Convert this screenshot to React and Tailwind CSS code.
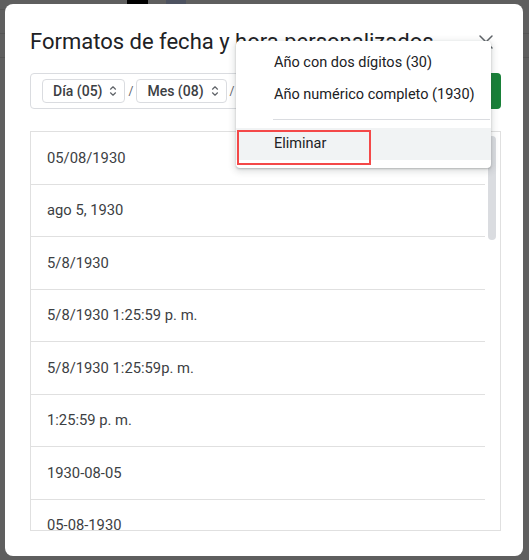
import React from 'react';
import { X } from 'lucide-react';

const FORMATS = [
  '05/08/1930',
  'ago 5, 1930',
  '5/8/1930',
  '5/8/1930 1:25:59 p. m.',
  '5/8/1930 1:25:59p. m.',
  '1:25:59 p. m.',
  '1930-08-05',
  '05-08-1930',
];

const UnfoldIcon = () => (
  <svg width="10" height="12" viewBox="0 0 10 12" fill="none" stroke="#5f6368" strokeWidth="1.2" strokeLinecap="round" strokeLinejoin="round">
    <path d="M2.5 4.2 L5 1.8 L7.5 4.2" />
    <path d="M2.5 7.8 L5 10.2 L7.5 7.8" />
  </svg>
);

const Chip = ({ label }) => (
  <div className="flex items-center h-[24px] pl-[10px] pr-[6px] gap-[6px] border border-[#dadce0] rounded-[4px] text-[14px] font-medium text-[#3c4043]">
    <span>{label}</span>
    <UnfoldIcon />
  </div>
);

const App = () => {
  return (
    <div className="relative w-[529px] h-[560px] overflow-hidden bg-[#5f5f5f] pt-[4px] pl-[5px] pr-[6px] pb-[4px]" style={{ fontFamily: 'Roboto, "Liberation Sans", sans-serif' }}>
      {/* background sheet remnants */}
      <div className="absolute left-[127px] top-0 w-[21px] h-[4px] bg-black" />
      <div className="absolute left-[166px] top-0 w-[20px] h-[4px] bg-[#4d5260]" />
      <div className="absolute left-0 top-[33px] w-full h-px bg-[#555]" />
      <div className="absolute left-0 top-[57px] w-full h-px bg-[#555]" />
      <div className="absolute left-0 top-[9px] w-[10px] h-px bg-[#555]" />

      <div className="relative h-full bg-white rounded-[8px] pt-[24px] pl-[25px] pr-[22px] pb-[25px] flex flex-col">
        <div className="flex items-center justify-between h-[28px]">
          <h2 className="text-[22px] leading-[28px] text-[#202124]">Formatos de fecha y hora personalizados</h2>
          <div className="w-[24px] h-[24px] mr-[3px] flex items-center justify-center text-[#5f6368]">
            <X size={24} strokeWidth={1.5} />
          </div>
        </div>

        <div className="flex items-center gap-[8px] mt-[17px] h-[36px]">
          <div className="flex-1 h-full flex items-center border border-[#dadce0] rounded-[4px] pl-[11px] text-[#5f6368]">
            <Chip label="Día (05)" />
            <span className="mx-[3px] text-[12px]">/</span>
            <Chip label="Mes (08)" />
            <span className="mx-[3px] text-[12px]">/</span>
          </div>
          <button className="h-full px-[20px] bg-[#188038] rounded-[4px] text-white text-[14px] font-medium">Aplicar</button>
        </div>

        <div className="mt-[22px] flex-1 flex border border-[#e0e0e0] overflow-hidden">
          <div className="flex-1 overflow-hidden">
            {FORMATS.map(f => (
              <div key={f} className="h-[52.5px] border-b border-[#e0e0e0] flex items-center pl-[16px] text-[14.75px] text-[#3c4043]">{f}</div>
            ))}
          </div>
          <div className="w-[15px] shrink-0">
            <div className="ml-[3px] mt-[4px] w-[8px] h-[104px] rounded-full bg-[#dadce0]" />
          </div>
        </div>
      </div>

      {/* dropdown menu */}
      <div className="absolute left-[236px] top-[41px] w-[255px] bg-white rounded-[4px] pt-[6px] pb-[8px] shadow-[0_2px_6px_2px_rgba(60,64,67,0.15),0_1px_2px_rgba(60,64,67,0.3)] text-[14.5px] text-[#202124]">
        <div className="h-[32px] flex items-center pl-[38px]">Año con dos dígitos (30)</div>
        <div className="h-[32px] flex items-center pl-[38px]">Año numérico completo (1930)</div>
        <div className="my-[8px] ml-[37px] mr-px h-px bg-[#dadce0]" />
        <div className="h-[32px] flex items-center pl-[38px] bg-[#f1f3f4]">Eliminar</div>
        <div className="absolute left-px top-[89px] w-[134px] h-[35px] border-2 border-[#f44848]" />
      </div>
    </div>
  );
};

export default App;
